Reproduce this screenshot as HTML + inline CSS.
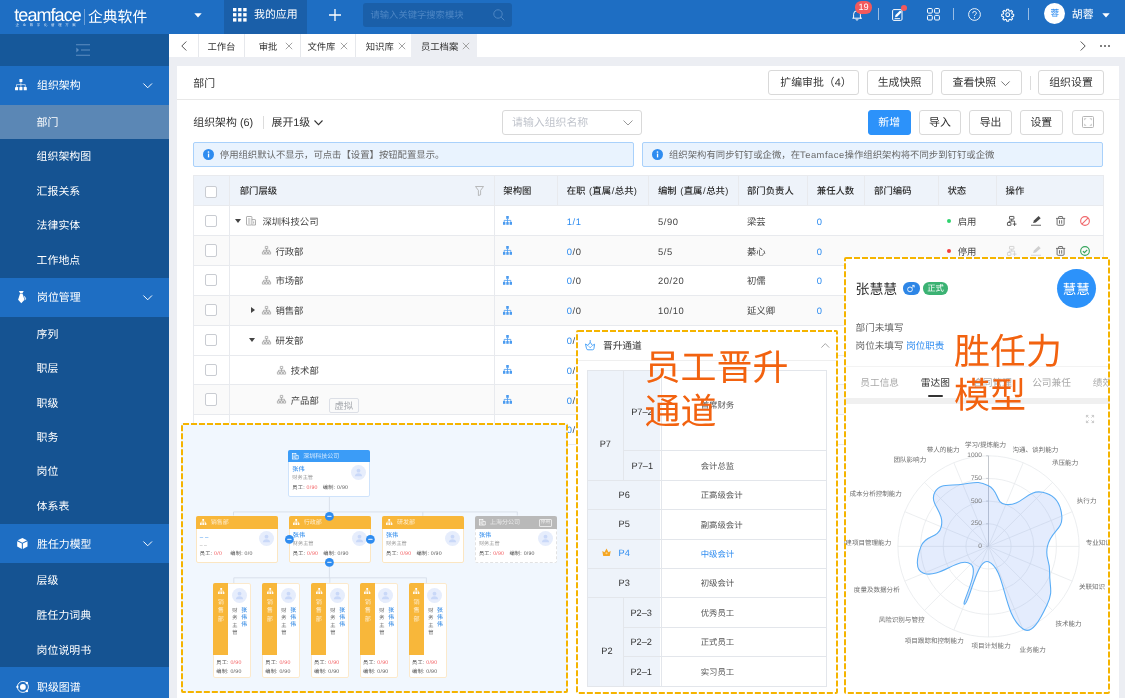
<!DOCTYPE html>
<html lang="zh-CN">
<head>
<meta charset="utf-8">
<title>Teamface 企典软件</title>
<style>
*{box-sizing:border-box;margin:0;padding:0}
html,body{width:1125px;height:698px;overflow:hidden;background:#eceef3}
body{font-family:"Liberation Sans","Noto Sans CJK SC",sans-serif;font-size:9.375px;color:#333;position:relative;-webkit-font-smoothing:antialiased;text-rendering:geometricPrecision}
.abs{position:absolute}
.t{position:absolute;white-space:nowrap;line-height:1}
svg{display:block;overflow:visible}
/* top bar */
#top{position:absolute;left:0;top:0;width:1125px;height:34px;background:#1e6ec3}
#top .myapp{position:absolute;left:224px;top:0;width:83px;height:34px;background:#1a5fa9}
#top .search{position:absolute;left:363px;top:2.5px;width:149px;height:24px;background:#1a5fa9;border-radius:3px}
.vd{position:absolute;width:1px;background:rgba(255,255,255,.55);top:8px;height:12px}
/* sidebar */
#side{position:absolute;left:0;top:34px;width:169px;height:664px;background:#155392}
#side .grp{position:absolute;left:0;width:169px;height:39px;background:#1e6ec3}
#side .sel{position:absolute;left:0;width:169px;background:#5b87b5}
#side .t{color:#fff;font-size:10.9px;margin-top:1.1px}
#top .t{margin-top:.8px}
#main>.t{margin-top:.8px}
/* tab bar */
#tabs{position:absolute;left:169px;top:34px;width:956px;height:23px;background:#fff}
#tabs .t{font-size:9.375px;color:#333;top:9.4px}
#tabs .d{position:absolute;top:0;width:1px;height:23px;background:#e6e8ec}
#tabs .x{position:absolute;top:8.3px;width:8px;height:8px}
/* card */
#card{position:absolute;left:177px;top:65.5px;width:942px;height:640px;background:#fff}
.btn{position:absolute;height:25px;border:1px solid #d9d9d9;border-radius:3px;background:#fff;font-size:10.9px;color:#333;text-align:center;line-height:25px;white-space:nowrap}
.btn.pri{background:#2c92fa;border-color:#2c92fa;color:#fff}
.banner{position:absolute;top:142px;height:24.5px;background:#e9f3fe;border:1px solid #a9d1fb;border-radius:2px}
.banner .t{top:8.2px;font-size:9.375px;color:#686868}
#main>.th{font-size:9.375px;font-weight:500;color:#2b2b2b;margin-top:1.3px}
#main>.td{font-size:9.375px;color:#444;margin-top:1.9px}
.ls{letter-spacing:1.1px}
.num{letter-spacing:.55px}
.cb{width:12.4px;height:12.4px;border:1px solid #c9ccd2;border-radius:2px;background:#fff}
.oc{width:82px;height:47px;background:#fff;border:1px solid #cfe3fb;border-radius:2px}
.rl{font-size:6.55px;color:#6e6e6e;margin-top:1.1px}
.big{font-size:36px;color:#f2620f;font-weight:400;line-height:1}
</style>
</head>
<body>
<div id="root" style="position:absolute;left:0;top:0;width:1125px;height:698px;will-change:transform;overflow:hidden">
<!-- ============ TOP BAR ============ -->
<div id="top">
  <!-- logo -->
  <div class="t" style="left:14.3px;top:5px;font-size:18px;color:#fff;letter-spacing:-0.95px;font-weight:400">teamface</div>
  <div class="t" style="left:15.6px;top:23px;font-size:3.4px;color:#dbe8f6;letter-spacing:3.7px">企业数字化管理方案</div>
  <div class="abs" style="left:84px;top:9px;width:1px;height:16px;background:rgba(255,255,255,.35)"></div>
  <div class="t" style="left:88px;top:10.5px;font-size:14.8px;color:#fff">企典软件</div>
  <svg class="abs" style="left:194px;top:13px" width="8" height="5" viewBox="0 0 8 5"><path d="M0.3 0.3h7.4L4 4.6z" fill="#fff"/></svg>
  <div class="myapp">
    <svg class="abs" style="left:9px;top:8px" width="14" height="14" viewBox="0 0 14 14" fill="#fff"><rect x="0" y="0" width="3.4" height="3.4"/><rect x="5.1" y="0" width="3.4" height="3.4"/><rect x="10.2" y="0" width="3.4" height="3.4"/><rect x="0" y="5.1" width="3.4" height="3.4"/><rect x="5.1" y="5.1" width="3.4" height="3.4"/><rect x="10.2" y="5.1" width="3.4" height="3.4"/><rect x="0" y="10.2" width="3.4" height="3.4"/><rect x="5.1" y="10.2" width="3.4" height="3.4"/><rect x="10.2" y="10.2" width="3.4" height="3.4"/></svg>
    <div class="t" style="left:30px;top:9px;font-size:10.9px;color:#fff">我的应用</div>
  </div>
  <svg class="abs" style="left:329px;top:8.5px" width="12" height="12" viewBox="0 0 12 12"><path d="M6 0v12M0 6h12" stroke="#fff" stroke-width="1.3" fill="none"/></svg>
  <div class="search">
    <div class="t" style="left:7.5px;top:7.5px;font-size:9.3px;color:#4d86c4">请输入关键字搜索模块</div>
    <svg class="abs" style="left:130px;top:6px" width="12" height="12" viewBox="0 0 12 12"><circle cx="5" cy="5" r="4.2" stroke="#4d86c4" stroke-width="1" fill="none"/><path d="M8.2 8.2L11.3 11.3" stroke="#4d86c4" stroke-width="1"/></svg>
  </div>
  <!-- right icons -->
  <svg class="abs" style="left:852px;top:9px" width="10" height="12" viewBox="0 0 10 12"><path d="M1.6 9.2V5.2a3.4 3.4 0 0 1 6.8 0v4H9.6M0.4 9.2h9.2M4 10.2a1 1 0 0 0 2 0" stroke="#fff" stroke-width="1" fill="none"/></svg>
  <div class="abs" style="left:855px;top:1.3px;width:17px;height:12.3px;border-radius:6.2px;background:#f2595c;color:#fff;font-size:9.2px;font-weight:400;line-height:12.6px;text-align:center">19</div>
  <div class="vd" style="left:878px"></div>
  <svg class="abs" style="left:892px;top:7.5px" width="12" height="13" viewBox="0 0 12 13"><rect x="0.6" y="1.6" width="9.4" height="10.8" rx="1.2" stroke="#fff" stroke-width="1" fill="none"/><path d="M3 9.2l.5-2.2 4.6-4.6 1.7 1.7-4.6 4.6z" fill="#fff"/><path d="M2.6 10.6h5.4" stroke="#fff" stroke-width=".9"/></svg>
  <div class="abs" style="left:900.8px;top:4.6px;width:6px;height:6px;border-radius:3px;background:#f2595c"></div>
  <svg class="abs" style="left:927px;top:7.6px" width="13" height="13" viewBox="0 0 13 13" fill="none" stroke="#fff" stroke-width="1"><rect x=".5" y=".5" width="4.8" height="4.6" rx="1"/><rect x="7.6" y=".5" width="4.8" height="4.6" rx="1"/><rect x=".5" y="7.4" width="4.8" height="4.6" rx="1"/><rect x="7.6" y="7.4" width="4.8" height="4.6" rx="1"/></svg>
  <div class="vd" style="left:953px"></div>
  <svg class="abs" style="left:968px;top:8px" width="13" height="13" viewBox="0 0 13 13"><circle cx="6.5" cy="6.5" r="5.9" stroke="#fff" stroke-width=".9" fill="none"/><path d="M4.7 5.2a1.8 1.8 0 1 1 2.6 1.6c-.6.3-.8.7-.8 1.3" stroke="#fff" stroke-width=".9" fill="none"/><circle cx="6.5" cy="9.7" r=".6" fill="#fff"/></svg>
  <svg class="abs" style="left:1001px;top:7.7px" width="13.4" height="13.4" viewBox="0 0 24 24" fill="none" stroke="#fff" stroke-width="1.95"><circle cx="12" cy="12" r="3.4"/><path d="M10.3 2.3h3.4l.5 2.7 1.9.8 2.3-1.6 2.4 2.4-1.6 2.3.8 1.9 2.7.5v3.4l-2.7.5-.8 1.9 1.6 2.3-2.4 2.4-2.3-1.6-1.9.8-.5 2.7h-3.4l-.5-2.7-1.9-.8-2.3 1.6-2.4-2.4 1.6-2.3-.8-1.9-2.7-.5v-3.4l2.7-.5.8-1.9-1.6-2.3 2.4-2.4 2.3 1.6 1.9-.8z" stroke-linejoin="round"/></svg>
  <div class="vd" style="left:1028px"></div>
  <div class="abs" style="left:1044.2px;top:3.3px;width:21.2px;height:21.2px;border-radius:11px;background:#fff;color:#2e8cf0;font-size:8.6px;line-height:21px;text-align:center">蓉</div>
  <div class="t" style="left:1071.8px;top:9px;font-size:10.9px;color:#fff">胡蓉</div>
  <svg class="abs" style="left:1102px;top:13px" width="8" height="5" viewBox="0 0 8 5"><path d="M0.3 0.3h7.4L4 4.6z" fill="#fff"/></svg>
</div>

<!-- ============ SIDEBAR ============ -->
<div id="side">
  <div class="abs" style="left:0;top:0;width:169px;height:31.5px;background:#16589a"></div>
  <svg class="abs" style="left:75.5px;top:10px" width="14" height="12" viewBox="0 0 14 12" stroke="#5d8dc1" stroke-width="1.1" fill="none"><path d="M0 .8h14M5 6h9M0 11.2h14"/><path d="M.3 3.6L3 6 .3 8.4z" fill="#5d8dc1" stroke="none"/></svg>

  <div class="grp" style="top:31.5px"></div>
  <div class="sel" style="top:70.5px;height:34.5px"></div>
  <div class="grp" style="top:243.7px"></div>
  <div class="grp" style="top:489.5px"></div>
  <div class="grp" style="top:632.6px"></div>

  <!-- group icons -->
  <svg class="abs" style="left:15.2px;top:45.2px" width="11.8" height="11.3" viewBox="0 0 11.8 11.3" fill="#fff"><rect x="4.4" y="0" width="3" height="3" rx=".5"/><rect x="0" y="8.1" width="3.1" height="3.1" rx=".5"/><rect x="4.35" y="8.1" width="3.1" height="3.1" rx=".5"/><rect x="8.7" y="8.1" width="3.1" height="3.1" rx=".5"/><path d="M5.9 3v5.1M1.55 8.1V5.6h8.7v2.5" stroke="#fff" stroke-width=".7" fill="none" opacity=".9"/></svg>
  <svg class="abs" style="left:17.9px;top:257.1px" width="8.4" height="12.4" viewBox="0 0 8.4 12.4" fill="#fff"><path d="M.9 0h4.8L4.6 2H2zM2.1 2.5h2.4l2 6.2-3.2 3.6L.1 8.7z"/><path d="M5.6 4.6c1.6 1 2.8 2.6 2.6 3.4L6.7 9.8 6.9 8.5z" opacity=".75"/></svg>
  <svg class="abs" style="left:16.9px;top:504px" width="10.7" height="11.2" viewBox="0 0 12 13" fill="#fff"><path d="M6 0l5.4 2.7L6 5.4.6 2.7z"/><path d="M0 3.8l5.4 2.7v6.2L0 10z"/><path d="M12 3.8L6.6 6.5v6.2L12 10z"/></svg>
  <svg class="abs" style="left:16px;top:646px" width="13.8" height="13.8" viewBox="0 0 13.8 13.8" fill="none" stroke="#fff" stroke-width=".9"><circle cx="6.9" cy="6.9" r="5.5"/><circle cx="6.9" cy="6.9" r="2.9" fill="#fff" stroke="none"/><circle cx="1.4" cy="6.9" r="1.15" fill="#fff" stroke="none"/><circle cx="10.9" cy="2.9" r="1.25" fill="#fff" stroke="none"/><circle cx="10.9" cy="10.9" r="1.25" fill="#fff" stroke="none"/></svg>

  <!-- chevrons -->
  <svg class="abs" style="left:143px;top:48.8px" width="9.4" height="5.6" viewBox="0 0 9.4 5.6"><path d="M.4.5L4.7 4.8 9 .5" stroke="#fff" stroke-width="1" fill="none"/></svg>
  <svg class="abs" style="left:143px;top:260.9px" width="9.4" height="5.6" viewBox="0 0 9.4 5.6"><path d="M.4.5L4.7 4.8 9 .5" stroke="#fff" stroke-width="1" fill="none"/></svg>
  <svg class="abs" style="left:143px;top:506.8px" width="9.4" height="5.6" viewBox="0 0 9.4 5.6"><path d="M.4.5L4.7 4.8 9 .5" stroke="#fff" stroke-width="1" fill="none"/></svg>

  <div class="t" style="left:37px;top:45.6px">组织架构</div>
  <div class="t" style="left:36.6px;top:82.9px">部门</div>
  <div class="t" style="left:36.6px;top:117.3px">组织架构图</div>
  <div class="t" style="left:36.6px;top:151.8px">汇报关系</div>
  <div class="t" style="left:36.6px;top:186.2px">法律实体</div>
  <div class="t" style="left:36.6px;top:220.5px">工作地点</div>
  <div class="t" style="left:37px;top:257.8px">岗位管理</div>
  <div class="t" style="left:36.6px;top:294.7px">序列</div>
  <div class="t" style="left:36.6px;top:329.2px">职层</div>
  <div class="t" style="left:36.6px;top:363.6px">职级</div>
  <div class="t" style="left:36.6px;top:398px">职务</div>
  <div class="t" style="left:36.6px;top:432.4px">岗位</div>
  <div class="t" style="left:36.6px;top:467px">体系表</div>
  <div class="t" style="left:37px;top:504.5px">胜任力模型</div>
  <div class="t" style="left:36.6px;top:541.4px">层级</div>
  <div class="t" style="left:36.6px;top:576px">胜任力词典</div>
  <div class="t" style="left:36.6px;top:610.6px">岗位说明书</div>
  <div class="t" style="left:37px;top:647.5px">职级图谱</div>
</div>

<!-- ============ TAB BAR ============ -->
<div id="tabs">
  <svg class="abs" style="left:11.5px;top:7px" width="6" height="10" viewBox="0 0 6 10"><path d="M5.3.5L.8 5l4.5 4.5" stroke="#555" stroke-width="1" fill="none"/></svg>
  <div class="d" style="left:29px"></div>
  <div class="t" style="left:38.4px">工作台</div>
  <div class="d" style="left:75px"></div>
  <div class="t" style="left:89.7px">审批</div>
  <svg class="x" style="left:115.5px" viewBox="0 0 8 8"><path d="M.8.8l6.4 6.4M7.2.8L.8 7.2" stroke="#999" stroke-width=".9"/></svg>
  <div class="d" style="left:131px"></div>
  <div class="t" style="left:138.4px">文件库</div>
  <svg class="x" style="left:171px" viewBox="0 0 8 8"><path d="M.8.8l6.4 6.4M7.2.8L.8 7.2" stroke="#999" stroke-width=".9"/></svg>
  <div class="d" style="left:186px"></div>
  <div class="t" style="left:196.7px">知识库</div>
  <svg class="x" style="left:228.8px" viewBox="0 0 8 8"><path d="M.8.8l6.4 6.4M7.2.8L.8 7.2" stroke="#999" stroke-width=".9"/></svg>
  <div class="abs" style="left:242.2px;top:0;width:66px;height:23px;background:#eceef3"></div>
  <div class="t" style="left:251.9px">员工档案</div>
  <svg class="x" style="left:292.8px" viewBox="0 0 8 8"><path d="M.8.8l6.4 6.4M7.2.8L.8 7.2" stroke="#999" stroke-width=".9"/></svg>
  <svg class="abs" style="left:910.5px;top:7px" width="6" height="10" viewBox="0 0 6 10"><path d="M.7.5L5.2 5 .7 9.5" stroke="#555" stroke-width="1" fill="none"/></svg>
  <div class="abs" style="left:931px;top:10.8px;width:2px;height:2px;border-radius:1px;background:#555;box-shadow:4px 0 0 #555,8px 0 0 #555"></div>
</div>

<!-- ============ CARD ============ -->
<div id="card">
</div>
<div id="main">
  <!-- card header -->
  <div class="t" style="left:193.3px;top:78.3px;font-size:10.9px;color:#333">部门</div>
  <div class="abs" style="left:177px;top:99px;width:942.5px;height:1px;background:#e8e8e8"></div>
  <div class="btn" style="left:768px;top:70px;width:90.5px;line-height:25px;padding-left:5.5px">扩编审批（4）</div>
  <div class="btn" style="left:866.5px;top:70px;width:66px;line-height:25px">生成快照</div>
  <div class="btn" style="left:940.5px;top:70px;width:81px;text-align:left;padding-left:11px;line-height:25px">查看快照<svg class="abs" style="left:59.5px;top:9.5px" width="9" height="5.4" viewBox="0 0 9 5.4"><path d="M.4.5L4.5 4.6 8.6.5" stroke="#666" stroke-width=".9" fill="none"/></svg></div>
  <div class="abs" style="left:1029.5px;top:76px;width:1px;height:14px;background:#dcdcdc"></div>
  <div class="btn" style="left:1038px;top:70px;width:66px;line-height:25px">组织设置</div>

  <!-- toolbar -->
  <div class="t" style="left:193.3px;top:116.8px;font-size:10.9px;color:#333">组织架构 (6)</div>
  <div class="abs" style="left:263px;top:116px;width:1px;height:13px;background:#dcdcdc"></div>
  <div class="t" style="left:271.5px;top:116.8px;font-size:10.9px;color:#333">展开1级</div>
  <svg class="abs" style="left:313.5px;top:120px" width="9" height="5.6" viewBox="0 0 9 5.6"><path d="M.5.5L4.5 4.6 8.5.5" stroke="#333" stroke-width="1.1" fill="none"/></svg>
  <div class="abs" style="left:502px;top:109.5px;width:140px;height:25px;border:1px solid #d9d9d9;border-radius:3px;background:#fff"></div>
  <div class="t" style="left:512px;top:116.8px;font-size:10.9px;color:#c0c4cc">请输入组织名称</div>
  <svg class="abs" style="left:622.5px;top:119.5px" width="10" height="6" viewBox="0 0 10 6"><path d="M.5.5L5 5 9.5.5" stroke="#999" stroke-width="1" fill="none"/></svg>
  <div class="btn pri" style="left:868px;top:109.5px;width:42.5px">新增</div>
  <div class="btn" style="left:918.7px;top:109.5px;width:42.5px">导入</div>
  <div class="btn" style="left:969.3px;top:109.5px;width:42.5px">导出</div>
  <div class="btn" style="left:1019.8px;top:109.5px;width:43px">设置</div>
  <div class="btn" style="left:1071.5px;top:109.5px;width:32.5px"><svg class="abs" style="left:9.5px;top:5.5px" width="12" height="12" viewBox="0 0 12 12"><rect x=".5" y=".5" width="11" height="11" rx="1" stroke="#b5b5b5" stroke-width="1" fill="#fff"/><path d="M2.2 4.6V2.2h2.4M7.4 2.2h2.4v2.4M9.8 7.4v2.4H7.4M4.6 9.8H2.2V7.4" fill="#c4c4c4" stroke="none"/></svg></div>

  <!-- banners -->
  <div class="banner" style="left:192.8px;width:441.3px">
    <svg class="abs" style="left:9px;top:6px" width="11" height="11" viewBox="0 0 11 11"><circle cx="5.5" cy="5.5" r="5.5" fill="#2e8cf0"/><rect x="4.9" y="4.6" width="1.3" height="3.8" fill="#fff"/><circle cx="5.5" cy="3" r=".85" fill="#fff"/></svg>
    <div class="t" style="left:26px">停用组织默认不显示，可点击【设置】按钮配置显示。</div>
  </div>
  <div class="banner" style="left:642px;width:461px">
    <svg class="abs" style="left:8.8px;top:6px" width="11" height="11" viewBox="0 0 11 11"><circle cx="5.5" cy="5.5" r="5.5" fill="#2e8cf0"/><rect x="4.9" y="4.6" width="1.3" height="3.8" fill="#fff"/><circle cx="5.5" cy="3" r=".85" fill="#fff"/></svg>
    <div class="t" style="left:26px">组织架构有同步钉钉或企微，在<span style="letter-spacing:.5px">Teamface</span>操作组织架构将不同步到钉钉或企微</div>
  </div>

<div class="abs" style="left:192.8px;top:175px;width:910.5px;height:30.5px;background:#eef3fa"></div>
  <div class="abs" style="left:192.8px;top:205.5px;width:910.5px;height:29.8px;background:#fff"></div>
  <div class="abs" style="left:192.8px;top:235.3px;width:910.5px;height:29.8px;background:#fafafa"></div>
  <div class="abs" style="left:192.8px;top:265.1px;width:910.5px;height:29.8px;background:#fff"></div>
  <div class="abs" style="left:192.8px;top:294.9px;width:910.5px;height:29.8px;background:#fafafa"></div>
  <div class="abs" style="left:192.8px;top:324.7px;width:910.5px;height:29.8px;background:#fff"></div>
  <div class="abs" style="left:192.8px;top:354.5px;width:910.5px;height:29.8px;background:#fff"></div>
  <div class="abs" style="left:192.8px;top:384.3px;width:910.5px;height:29.8px;background:#fafafa"></div>
  <div class="abs" style="left:192.8px;top:175.0px;width:910.5px;height:1px;background:#e8eaee"></div>
  <div class="abs" style="left:192.8px;top:205px;width:910.5px;height:1px;background:#e8eaee"></div>
  <div class="abs" style="left:192.8px;top:235.3px;width:910.5px;height:1px;background:#e8eaee"></div>
  <div class="abs" style="left:192.8px;top:265.1px;width:910.5px;height:1px;background:#e8eaee"></div>
  <div class="abs" style="left:192.8px;top:294.9px;width:910.5px;height:1px;background:#e8eaee"></div>
  <div class="abs" style="left:192.8px;top:324.7px;width:910.5px;height:1px;background:#e8eaee"></div>
  <div class="abs" style="left:192.8px;top:354.5px;width:910.5px;height:1px;background:#e8eaee"></div>
  <div class="abs" style="left:192.8px;top:384.3px;width:910.5px;height:1px;background:#e8eaee"></div>
  <div class="abs" style="left:192.8px;top:414.1px;width:910.5px;height:1px;background:#e8eaee"></div>
  <div class="abs" style="left:192.8px;top:175px;width:1px;height:249.1px;background:#e8eaee"></div>
  <div class="abs" style="left:229.2px;top:175px;width:1px;height:249.1px;background:#e8eaee"></div>
  <div class="abs" style="left:493.7px;top:175px;width:1px;height:249.1px;background:#e8eaee"></div>
  <div class="abs" style="left:557.4px;top:175px;width:1px;height:30.5px;background:#e8eaee"></div>
  <div class="abs" style="left:648.2px;top:175px;width:1px;height:30.5px;background:#e8eaee"></div>
  <div class="abs" style="left:738.2px;top:175px;width:1px;height:30.5px;background:#e8eaee"></div>
  <div class="abs" style="left:807.3px;top:175px;width:1px;height:30.5px;background:#e8eaee"></div>
  <div class="abs" style="left:864.2px;top:175px;width:1px;height:30.5px;background:#e8eaee"></div>
  <div class="abs" style="left:938.3px;top:175px;width:1px;height:30.5px;background:#e8eaee"></div>
  <div class="abs" style="left:995.7px;top:175px;width:1px;height:30.5px;background:#e8eaee"></div>
  <div class="abs" style="left:1103.3px;top:175px;width:1px;height:249.1px;background:#e8eaee"></div>
  <div class="t th" style="left:239.7px;top:186.0px">部门层级</div>
  <div class="t th" style="left:503.3px;top:186.0px">架构图</div>
  <div class="t th" style="left:566.7px;top:186.0px">在职<span style="margin:0 .2px 0 1px"> (</span>直属<span style="margin:0 .6px">/</span>总共<span style="margin-left:.3px">)</span></div>
  <div class="t th" style="left:658px;top:186.0px">编制<span style="margin:0 .2px 0 1px"> (</span>直属<span style="margin:0 .6px">/</span>总共<span style="margin-left:.3px">)</span></div>
  <div class="t th" style="left:747px;top:186.0px">部门负责人</div>
  <div class="t th" style="left:816.8px;top:186.0px">兼任人数</div>
  <div class="t th" style="left:874.1px;top:186.0px">部门编码</div>
  <div class="t th" style="left:947.4px;top:186.0px">状态</div>
  <div class="t th" style="left:1005.6px;top:186.0px">操作</div>
  <svg class="abs" style="left:474.5px;top:186px" width="9" height="10" viewBox="0 0 9 10"><path d="M.5.5h8L5.6 4.4v4.4L3.4 9.5V4.4z" stroke="#aaa" stroke-width=".8" fill="none" stroke-linejoin="round"/></svg>
  <div class="abs cb" style="left:204.7px;top:186.0px"></div>
  <div class="abs cb" style="left:204.7px;top:214.5px"></div>
  <svg class="abs" style="left:235.4px;top:218.8px" width="6" height="4" viewBox="0 0 6 4"><path d="M0 0h6L3 4z" fill="#444"/></svg>
  <svg class="abs" style="left:246px;top:216.0px" width="10" height="9.5" viewBox="0 0 10 9.5" fill="none" stroke="#999" stroke-width=".8"><rect x=".5" y=".5" width="5.4" height="8.5" rx=".6"/><path d="M5.9 3.6h3.1a.5.5 0 0 1 .5.5V9H5.9M2 3h2.4M2 5h2.4M2 7h2.4M7.7 5.4v2.2"/></svg>
  <div class="t td" style="left:262.4px;top:215.9px">深圳科技公司</div>
  <svg class="abs" style="left:503px;top:216.2px" width="9" height="9" viewBox="0 0 9 9" fill="#4a9bf0"><rect x="3.2" y="0" width="2.6" height="2.8"/><rect x="0" y="6" width="2.4" height="2.8"/><rect x="3.3" y="6" width="2.4" height="2.8"/><rect x="6.6" y="6" width="2.4" height="2.8"/><path d="M4.5 2.8v3.2M1.2 6V4.4h6.6V6" stroke="#4a9bf0" stroke-width=".8" fill="none"/></svg>
  <div class="t td num" style="left:566.8px;top:215.9px;color:#2e8cf0">1/1</div>
  <div class="t td num" style="left:658px;top:215.9px">5/90</div>
  <div class="t td" style="left:747px;top:215.9px">梁芸</div>
  <div class="t td num" style="left:816.8px;top:215.9px;color:#2e8cf0">0</div>
  <div class="abs cb" style="left:204.7px;top:244.3px"></div>
  <svg class="abs" style="left:261.5px;top:246.4px" width="9" height="8.5" viewBox="0 0 9 8.5" stroke="#999"><path d="M3.3.4h2.4v2.2H3.3zM.4 5.9h2.2v2.2H.4zM3.4 5.9h2.2v2.2H3.4zM6.4 5.9h2.2v2.2H6.4zM4.5 2.6v3.3M1.5 5.9V4.3h6v1.6" fill="none" stroke-width=".7"/></svg>
  <div class="t td" style="left:275.4px;top:245.7px">行政部</div>
  <svg class="abs" style="left:503px;top:246.0px" width="9" height="9" viewBox="0 0 9 9" fill="#4a9bf0"><rect x="3.2" y="0" width="2.6" height="2.8"/><rect x="0" y="6" width="2.4" height="2.8"/><rect x="3.3" y="6" width="2.4" height="2.8"/><rect x="6.6" y="6" width="2.4" height="2.8"/><path d="M4.5 2.8v3.2M1.2 6V4.4h6.6V6" stroke="#4a9bf0" stroke-width=".8" fill="none"/></svg>
  <div class="t td num" style="left:566.8px;top:245.7px"><span style="color:#2e8cf0">0</span>/0</div>
  <div class="t td num" style="left:658px;top:245.7px">5/5</div>
  <div class="t td" style="left:747px;top:245.7px">綦心</div>
  <div class="t td num" style="left:816.8px;top:245.7px;color:#2e8cf0">0</div>
  <div class="abs cb" style="left:204.7px;top:274.1px"></div>
  <svg class="abs" style="left:261.5px;top:276.2px" width="9" height="8.5" viewBox="0 0 9 8.5" stroke="#999"><path d="M3.3.4h2.4v2.2H3.3zM.4 5.9h2.2v2.2H.4zM3.4 5.9h2.2v2.2H3.4zM6.4 5.9h2.2v2.2H6.4zM4.5 2.6v3.3M1.5 5.9V4.3h6v1.6" fill="none" stroke-width=".7"/></svg>
  <div class="t td" style="left:275.4px;top:275.5px">市场部</div>
  <svg class="abs" style="left:503px;top:275.8px" width="9" height="9" viewBox="0 0 9 9" fill="#4a9bf0"><rect x="3.2" y="0" width="2.6" height="2.8"/><rect x="0" y="6" width="2.4" height="2.8"/><rect x="3.3" y="6" width="2.4" height="2.8"/><rect x="6.6" y="6" width="2.4" height="2.8"/><path d="M4.5 2.8v3.2M1.2 6V4.4h6.6V6" stroke="#4a9bf0" stroke-width=".8" fill="none"/></svg>
  <div class="t td num" style="left:566.8px;top:275.5px"><span style="color:#2e8cf0">0</span>/0</div>
  <div class="t td num" style="left:658px;top:275.5px">20/20</div>
  <div class="t td" style="left:747px;top:275.5px">初儒</div>
  <div class="t td num" style="left:816.8px;top:275.5px;color:#2e8cf0">0</div>
  <div class="abs cb" style="left:204.7px;top:303.9px"></div>
  <svg class="abs" style="left:250.5px;top:307.2px" width="4" height="6" viewBox="0 0 4 6"><path d="M0 0v6L4 3z" fill="#444"/></svg>
  <svg class="abs" style="left:261.5px;top:306.0px" width="9" height="8.5" viewBox="0 0 9 8.5" stroke="#999"><path d="M3.3.4h2.4v2.2H3.3zM.4 5.9h2.2v2.2H.4zM3.4 5.9h2.2v2.2H3.4zM6.4 5.9h2.2v2.2H6.4zM4.5 2.6v3.3M1.5 5.9V4.3h6v1.6" fill="none" stroke-width=".7"/></svg>
  <div class="t td" style="left:275.4px;top:305.3px">销售部</div>
  <svg class="abs" style="left:503px;top:305.6px" width="9" height="9" viewBox="0 0 9 9" fill="#4a9bf0"><rect x="3.2" y="0" width="2.6" height="2.8"/><rect x="0" y="6" width="2.4" height="2.8"/><rect x="3.3" y="6" width="2.4" height="2.8"/><rect x="6.6" y="6" width="2.4" height="2.8"/><path d="M4.5 2.8v3.2M1.2 6V4.4h6.6V6" stroke="#4a9bf0" stroke-width=".8" fill="none"/></svg>
  <div class="t td num" style="left:566.8px;top:305.3px"><span style="color:#2e8cf0">0</span>/0</div>
  <div class="t td num" style="left:658px;top:305.3px">10/10</div>
  <div class="t td" style="left:747px;top:305.3px">延义卿</div>
  <div class="t td num" style="left:816.8px;top:305.3px;color:#2e8cf0">0</div>
  <div class="abs cb" style="left:204.7px;top:333.7px"></div>
  <svg class="abs" style="left:249.4px;top:338.0px" width="6" height="4" viewBox="0 0 6 4"><path d="M0 0h6L3 4z" fill="#444"/></svg>
  <svg class="abs" style="left:261.5px;top:335.8px" width="9" height="8.5" viewBox="0 0 9 8.5" stroke="#999"><path d="M3.3.4h2.4v2.2H3.3zM.4 5.9h2.2v2.2H.4zM3.4 5.9h2.2v2.2H3.4zM6.4 5.9h2.2v2.2H6.4zM4.5 2.6v3.3M1.5 5.9V4.3h6v1.6" fill="none" stroke-width=".7"/></svg>
  <div class="t td" style="left:275.4px;top:335.1px">研发部</div>
  <svg class="abs" style="left:503px;top:335.4px" width="9" height="9" viewBox="0 0 9 9" fill="#4a9bf0"><rect x="3.2" y="0" width="2.6" height="2.8"/><rect x="0" y="6" width="2.4" height="2.8"/><rect x="3.3" y="6" width="2.4" height="2.8"/><rect x="6.6" y="6" width="2.4" height="2.8"/><path d="M4.5 2.8v3.2M1.2 6V4.4h6.6V6" stroke="#4a9bf0" stroke-width=".8" fill="none"/></svg>
  <div class="t td num" style="left:566.8px;top:335.1px"><span style="color:#2e8cf0">0</span>/0</div>
  <div class="abs cb" style="left:204.7px;top:363.5px"></div>
  <svg class="abs" style="left:277.3px;top:365.6px" width="9" height="8.5" viewBox="0 0 9 8.5" stroke="#999"><path d="M3.3.4h2.4v2.2H3.3zM.4 5.9h2.2v2.2H.4zM3.4 5.9h2.2v2.2H3.4zM6.4 5.9h2.2v2.2H6.4zM4.5 2.6v3.3M1.5 5.9V4.3h6v1.6" fill="none" stroke-width=".7"/></svg>
  <div class="t td" style="left:290.7px;top:364.9px">技术部</div>
  <svg class="abs" style="left:503px;top:365.2px" width="9" height="9" viewBox="0 0 9 9" fill="#4a9bf0"><rect x="3.2" y="0" width="2.6" height="2.8"/><rect x="0" y="6" width="2.4" height="2.8"/><rect x="3.3" y="6" width="2.4" height="2.8"/><rect x="6.6" y="6" width="2.4" height="2.8"/><path d="M4.5 2.8v3.2M1.2 6V4.4h6.6V6" stroke="#4a9bf0" stroke-width=".8" fill="none"/></svg>
  <div class="t td num" style="left:566.8px;top:364.9px"><span style="color:#2e8cf0">0</span>/0</div>
  <div class="abs cb" style="left:204.7px;top:393.3px"></div>
  <svg class="abs" style="left:277.3px;top:395.4px" width="9" height="8.5" viewBox="0 0 9 8.5" stroke="#999"><path d="M3.3.4h2.4v2.2H3.3zM.4 5.9h2.2v2.2H.4zM3.4 5.9h2.2v2.2H3.4zM6.4 5.9h2.2v2.2H6.4zM4.5 2.6v3.3M1.5 5.9V4.3h6v1.6" fill="none" stroke-width=".7"/></svg>
  <div class="t td" style="left:290.7px;top:394.7px">产品部</div>
  <svg class="abs" style="left:503px;top:395.0px" width="9" height="9" viewBox="0 0 9 9" fill="#4a9bf0"><rect x="3.2" y="0" width="2.6" height="2.8"/><rect x="0" y="6" width="2.4" height="2.8"/><rect x="3.3" y="6" width="2.4" height="2.8"/><rect x="6.6" y="6" width="2.4" height="2.8"/><path d="M4.5 2.8v3.2M1.2 6V4.4h6.6V6" stroke="#4a9bf0" stroke-width=".8" fill="none"/></svg>
  <div class="t td num" style="left:566.8px;top:394.7px"><span style="color:#2e8cf0">0</span>/0</div>
  <div class="abs" style="left:329px;top:397.5px;width:29.6px;height:15px;border:1px solid #dcdfe6;border-radius:2px;background:#fafafa;color:#a6a9ae;font-size:9.375px;line-height:14px;text-align:center">虚拟</div>
  <div class="abs" style="left:947.2px;top:219.4px;width:3.8px;height:3.8px;border-radius:2px;background:#2fd36e"></div>
  <div class="t td" style="left:957.7px;top:215.9px">启用</div>
  <svg class="abs" style="left:1007.1px;top:216.1px" width="9.6" height="10.2" viewBox="0 0 9.6 10.2" fill="none" stroke="#4a4a4a" stroke-width=".9"><rect x="2.5" y=".45" width="4.4" height="2.7" rx=".3"/><rect x=".45" y="6.5" width="3.5" height="2.9" rx=".3"/><path d="M4.7 3.2v1.9M2.1 6.5V5.1h5.5v1.1M7.6 6.2v3.8M5.7 8.1h3.8"/></svg>
  <svg class="abs" style="left:1031.1px;top:216.1px" width="10" height="10" viewBox="0 0 10 10"><path d="M2.1 7.1l.8-2.7L7.6.1l2.1 2.1L4.8 6.4z" fill="#4a4a4a"/><path d="M0 9.25h10" stroke="#4a4a4a" stroke-width=".85"/></svg>
  <svg class="abs" style="left:1056px;top:216.1px" width="9.2" height="9.8" viewBox="0 0 9.2 9.8" fill="none" stroke="#686868" stroke-width=".95"><path d="M0 2.4h9.2M2.6 2.3V1.1a.6.6 0 0 1 .6-.6h2.8a.6.6 0 0 1 .6.6v1.2M1.1 2.6v5.7a1 1 0 0 0 1 1h5a1 1 0 0 0 1-1V2.6M3.5 4.2v3.5M5.7 4.2v3.5"/></svg>
  <svg class="abs" style="left:1079.8px;top:216.3px" width="10" height="10" viewBox="0 0 10 10" fill="none" stroke="#f0666a" stroke-width="1.1"><circle cx="5" cy="5" r="4.35"/><path d="M1.9 8.1L8.1 1.9"/></svg>
  <div class="abs" style="left:947.2px;top:249px;width:3.8px;height:3.8px;border-radius:2px;background:#f23c3c"></div>
  <div class="t td" style="left:957.7px;top:245.7px">停用</div>
  <svg class="abs" style="left:1007.1px;top:245.6px" width="9.6" height="10.2" viewBox="0 0 9.6 10.2" fill="none" stroke="#cfcfcf" stroke-width=".9"><rect x="2.5" y=".45" width="4.4" height="2.7" rx=".3"/><rect x=".45" y="6.5" width="3.5" height="2.9" rx=".3"/><path d="M4.7 3.2v1.9M2.1 6.5V5.1h5.5v1.1M7.6 6.2v3.8M5.7 8.1h3.8"/></svg>
  <svg class="abs" style="left:1031.1px;top:245.6px" width="10" height="10" viewBox="0 0 10 10"><path d="M2.1 7.1l.8-2.7L7.6.1l2.1 2.1L4.8 6.4z" fill="#cfcfcf"/><path d="M0 9.25h10" stroke="#cfcfcf" stroke-width=".85"/></svg>
  <svg class="abs" style="left:1056px;top:245.6px" width="9.2" height="9.8" viewBox="0 0 9.2 9.8" fill="none" stroke="#686868" stroke-width=".95"><path d="M0 2.4h9.2M2.6 2.3V1.1a.6.6 0 0 1 .6-.6h2.8a.6.6 0 0 1 .6.6v1.2M1.1 2.6v5.7a1 1 0 0 0 1 1h5a1 1 0 0 0 1-1V2.6M3.5 4.2v3.5M5.7 4.2v3.5"/></svg>
  <svg class="abs" style="left:1079.8px;top:245.8px" width="10" height="10" viewBox="0 0 10 10" fill="none" stroke="#36a55c" stroke-width="1.1"><circle cx="5" cy="5" r="4.35"/><path d="M2.9 5.1l1.5 1.5 2.8-2.8" stroke-width="1.2"/></svg>
<div class="t td num" style="left:566.8px;top:424.3px"><span style="color:#2e8cf0">0</span>/0</div>
  <div class="abs" style="left:192.8px;top:443.9px;width:910.5px;height:1px;background:#e8eaee"></div>
<!--/TABLE-->
</div>

<!-- ============ ORG CHART PANEL ============ -->
<div id="org" class="abs" style="left:181px;top:423px;width:387px;height:270px;background:#f1f7fe"></div>
<svg class="abs" style="left:0;top:0" width="1125" height="698" viewBox="0 0 1125 698" fill="none" stroke="#d3dbe6" stroke-width=".8">
<path d="M329.4 496v16M233.5 515.5v-3.6h283.8v3.6M422.8 511.9v4M329.4 562v16M233.8 583v-5.2h192.6v5.2M329.8 577.8v5"/></svg>
<div class="abs oc" style="left:288.3px;top:450.1px;border-color:#cfe3fb"><div class="abs" style="left:-1px;top:-1px;width:82px;height:12.4px;background:#3b9cf7;border-radius:2px 2px 0 0"></div></div>
<svg class="abs" style="left:292.3px;top:453.1px" width="6.6" height="6.4" viewBox="0 0 10 9.5" fill="none" stroke="#fff" stroke-width="1.1"><rect x=".5" y=".5" width="5.4" height="8.5"/><path d="M5.9 3.6h3.6V9H5.9M2 3h2.4M2 5h2.4M2 7h2.4"/></svg>
<div class="t" style="left:303.3px;top:454.2px;font-size:6px;color:#d9ebfe">深圳科技公司</div>
<div class="t" style="left:292.3px;top:466.9px;font-size:6.1px;font-weight:500;color:#3a92ee">张伟</div>
<div class="t" style="left:292.3px;top:475.9px;font-size:5.2px;color:#999">财务主管</div>
<div class="t" style="left:292.3px;top:486.1px;font-size:5.2px;color:#555;letter-spacing:.25px">员工: <span style="color:#f2595c">0/90</span></div>
<div class="t" style="left:322.8px;top:486.1px;font-size:5.2px;color:#555;letter-spacing:.25px">编制: 0/90</div>
<svg class="abs" style="left:351.3px;top:464.7px" width="15" height="15" viewBox="0 0 15 15"><circle cx="7.5" cy="7.5" r="7.5" fill="#e6edfc"/><circle cx="7.5" cy="5.7" r="1.9" fill="#c9d8f8"/><path d="M3.9 11.2c0-2 1.6-3 3.6-3s3.6 1 3.6 3z" fill="#c9d8f8"/></svg>
<div class="abs oc" style="left:195.8px;top:516.3px;border-color:#fbe6c2"><div class="abs" style="left:-1px;top:-1px;width:82px;height:12.4px;background:#f8b73a;border-radius:2px 2px 0 0"></div></div>
<svg class="abs" style="left:199.8px;top:519.3px" width="6.4" height="6" viewBox="0 0 9 8.5" fill="#fff"><rect x="3.2" y="0" width="2.6" height="2.6"/><rect x="0" y="5.8" width="2.4" height="2.6"/><rect x="3.3" y="5.8" width="2.4" height="2.6"/><rect x="6.6" y="5.8" width="2.4" height="2.6"/><path d="M4.5 2.6v3.2M1.2 5.8V4.3h6.6v1.5" stroke="#fff" stroke-width=".8" fill="none"/></svg>
<div class="t" style="left:210.8px;top:520.4px;font-size:6px;color:#fdedcf">销售部</div>
<div class="t" style="left:199.8px;top:534.9px;font-size:6.1px;font-weight:500;color:#3a92ee">– –</div>
<div class="t" style="left:199.8px;top:543.7px;font-size:5.2px;color:#999">– –</div>
<div class="t" style="left:199.8px;top:552.3px;font-size:5.2px;color:#555;letter-spacing:.25px">员工: <span style="color:#f2595c">0/0</span></div>
<div class="t" style="left:230.3px;top:552.3px;font-size:5.2px;color:#555;letter-spacing:.25px">编制: 0/0</div>
<svg class="abs" style="left:258.8px;top:530.9px" width="15" height="15" viewBox="0 0 15 15"><circle cx="7.5" cy="7.5" r="7.5" fill="#e6edfc"/><circle cx="7.5" cy="5.7" r="1.9" fill="#c9d8f8"/><path d="M3.9 11.2c0-2 1.6-3 3.6-3s3.6 1 3.6 3z" fill="#c9d8f8"/></svg>
<div class="abs oc" style="left:288.8px;top:516.3px;border-color:#fbe6c2"><div class="abs" style="left:-1px;top:-1px;width:82px;height:12.4px;background:#f8b73a;border-radius:2px 2px 0 0"></div></div>
<svg class="abs" style="left:292.8px;top:519.3px" width="6.4" height="6" viewBox="0 0 9 8.5" fill="#fff"><rect x="3.2" y="0" width="2.6" height="2.6"/><rect x="0" y="5.8" width="2.4" height="2.6"/><rect x="3.3" y="5.8" width="2.4" height="2.6"/><rect x="6.6" y="5.8" width="2.4" height="2.6"/><path d="M4.5 2.6v3.2M1.2 5.8V4.3h6.6v1.5" stroke="#fff" stroke-width=".8" fill="none"/></svg>
<div class="t" style="left:303.8px;top:520.4px;font-size:6px;color:#fdedcf">行政部</div>
<div class="t" style="left:292.8px;top:533.1px;font-size:6.1px;font-weight:500;color:#3a92ee">张伟</div>
<div class="t" style="left:292.8px;top:542.1px;font-size:5.2px;color:#999">财务主管</div>
<div class="t" style="left:292.8px;top:552.3px;font-size:5.2px;color:#555;letter-spacing:.25px">员工: <span style="color:#f2595c">0/90</span></div>
<div class="t" style="left:323.3px;top:552.3px;font-size:5.2px;color:#555;letter-spacing:.25px">编制: 0/90</div>
<svg class="abs" style="left:351.8px;top:530.9px" width="15" height="15" viewBox="0 0 15 15"><circle cx="7.5" cy="7.5" r="7.5" fill="#e6edfc"/><circle cx="7.5" cy="5.7" r="1.9" fill="#c9d8f8"/><path d="M3.9 11.2c0-2 1.6-3 3.6-3s3.6 1 3.6 3z" fill="#c9d8f8"/></svg>
<div class="abs oc" style="left:382px;top:516.3px;border-color:#fbe6c2"><div class="abs" style="left:-1px;top:-1px;width:82px;height:12.4px;background:#f8b73a;border-radius:2px 2px 0 0"></div></div>
<svg class="abs" style="left:386px;top:519.3px" width="6.4" height="6" viewBox="0 0 9 8.5" fill="#fff"><rect x="3.2" y="0" width="2.6" height="2.6"/><rect x="0" y="5.8" width="2.4" height="2.6"/><rect x="3.3" y="5.8" width="2.4" height="2.6"/><rect x="6.6" y="5.8" width="2.4" height="2.6"/><path d="M4.5 2.6v3.2M1.2 5.8V4.3h6.6v1.5" stroke="#fff" stroke-width=".8" fill="none"/></svg>
<div class="t" style="left:397px;top:520.4px;font-size:6px;color:#fdedcf">研发部</div>
<div class="t" style="left:386px;top:533.1px;font-size:6.1px;font-weight:500;color:#3a92ee">张伟</div>
<div class="t" style="left:386px;top:542.1px;font-size:5.2px;color:#999">财务主管</div>
<div class="t" style="left:386px;top:552.3px;font-size:5.2px;color:#555;letter-spacing:.25px">员工: <span style="color:#f2595c">0/90</span></div>
<div class="t" style="left:416.5px;top:552.3px;font-size:5.2px;color:#555;letter-spacing:.25px">编制: 0/90</div>
<svg class="abs" style="left:445px;top:530.9px" width="15" height="15" viewBox="0 0 15 15"><circle cx="7.5" cy="7.5" r="7.5" fill="#e6edfc"/><circle cx="7.5" cy="5.7" r="1.9" fill="#c9d8f8"/><path d="M3.9 11.2c0-2 1.6-3 3.6-3s3.6 1 3.6 3z" fill="#c9d8f8"/></svg>
<div class="abs oc" style="left:474.9px;top:516.3px;border:1px dashed #e2e2e2"><div class="abs" style="left:-1px;top:-1px;width:82px;height:12.4px;background:#b9b9b9;border-radius:2px 2px 0 0"></div></div>
<svg class="abs" style="left:478.9px;top:519.3px" width="6.6" height="6.4" viewBox="0 0 10 9.5" fill="none" stroke="#fff" stroke-width="1.1"><rect x=".5" y=".5" width="5.4" height="8.5"/><path d="M5.9 3.6h3.6V9H5.9M2 3h2.4M2 5h2.4M2 7h2.4"/></svg>
<div class="t" style="left:489.9px;top:520.4px;font-size:6px;color:#ececec">上海分公司</div>
<div class="t" style="left:478.9px;top:533.1px;font-size:6.1px;font-weight:500;color:#3a92ee">张伟</div>
<div class="t" style="left:478.9px;top:542.1px;font-size:5.2px;color:#999">财务主管</div>
<div class="t" style="left:478.9px;top:552.3px;font-size:5.2px;color:#555;letter-spacing:.25px">员工: <span style="color:#f2595c">0/90</span></div>
<div class="t" style="left:509.4px;top:552.3px;font-size:5.2px;color:#555;letter-spacing:.25px">编制: 0/90</div>
<svg class="abs" style="left:537.9px;top:530.9px" width="15" height="15" viewBox="0 0 15 15"><circle cx="7.5" cy="7.5" r="7.5" fill="#e6edfc"/><circle cx="7.5" cy="5.7" r="1.9" fill="#c9d8f8"/><path d="M3.9 11.2c0-2 1.6-3 3.6-3s3.6 1 3.6 3z" fill="#c9d8f8"/></svg>
<div class="abs" style="left:538.9px;top:518.9px;width:13.4px;height:7.8px;border:.6px solid #e8e8e8;border-radius:1px;color:#eee;font-size:4.8px;line-height:6.6px;text-align:center">停用</div>
<svg class="abs" style="left:325.0px;top:512.2px" width="8.8" height="8.8" viewBox="0 0 8.8 8.8"><circle cx="4.4" cy="4.4" r="4.4" fill="#2e8cf0"/><rect x="2.2" y="3.8" width="4.4" height="1.2" rx=".5" fill="#cfe4fb"/></svg>
<svg class="abs" style="left:284.9px;top:535.1px" width="8.8" height="8.8" viewBox="0 0 8.8 8.8"><circle cx="4.4" cy="4.4" r="4.4" fill="#2e8cf0"/><rect x="2.2" y="3.8" width="4.4" height="1.2" rx=".5" fill="#cfe4fb"/></svg>
<svg class="abs" style="left:365.8px;top:535.1px" width="8.8" height="8.8" viewBox="0 0 8.8 8.8"><circle cx="4.4" cy="4.4" r="4.4" fill="#2e8cf0"/><rect x="2.2" y="3.8" width="4.4" height="1.2" rx=".5" fill="#cfe4fb"/></svg>
<svg class="abs" style="left:325.2px;top:557.5px" width="8.8" height="8.8" viewBox="0 0 8.8 8.8"><circle cx="4.4" cy="4.4" r="4.4" fill="#2e8cf0"/><rect x="2.2" y="3.8" width="4.4" height="1.2" rx=".5" fill="#cfe4fb"/></svg>
<div class="abs" style="left:213.4px;top:583.1px;width:37.4px;height:95.2px;background:#fff;border:1px solid #fbe9cc;border-radius:2px"></div>
<div class="abs" style="left:213.4px;top:583.1px;width:14.8px;height:72.2px;background:#f8b73a;border-radius:2px 0 0 0"></div>
<svg class="abs" style="left:217.6px;top:587.8px" width="6.4" height="6" viewBox="0 0 9 8.5" fill="#fff"><rect x="3.2" y="0" width="2.6" height="2.6"/><rect x="0" y="5.8" width="2.4" height="2.6"/><rect x="3.3" y="5.8" width="2.4" height="2.6"/><rect x="6.6" y="5.8" width="2.4" height="2.6"/><path d="M4.5 2.6v3.2M1.2 5.8V4.3h6.6v1.5" stroke="#fff" stroke-width=".8" fill="none"/></svg>
<div class="abs" style="left:217.7px;top:598.8px;width:6.2px;font-size:6.1px;line-height:8.4px;color:#fdeccb;text-align:center">销售部</div>
<svg class="abs" style="left:231.6px;top:587.6px" width="15" height="15" viewBox="0 0 15 15"><circle cx="7.5" cy="7.5" r="7.5" fill="#e6edfc"/><circle cx="7.5" cy="5.7" r="1.9" fill="#c9d8f8"/><path d="M3.9 11.2c0-2 1.6-3 3.6-3s3.6 1 3.6 3z" fill="#c9d8f8"/></svg>
<div class="abs" style="left:232.3px;top:607.8px;width:5.3px;font-size:5.2px;line-height:7.45px;color:#666;text-align:center">财务主管</div>
<div class="abs" style="left:241.2px;top:607.5px;width:6px;font-size:5.8px;line-height:7.45px;color:#3a8ee6;text-align:center;font-weight:500">张伟伟</div>
<div class="t" style="left:216.2px;top:661.0px;font-size:5.2px;color:#555;letter-spacing:.25px">员工: <span style="color:#f2595c">0/90</span></div>
<div class="t" style="left:216.2px;top:669.8px;font-size:5.2px;color:#555;letter-spacing:.25px">编制: 0/90</div>
<div class="abs" style="left:262.4px;top:583.1px;width:37.4px;height:95.2px;background:#fff;border:1px solid #fbe9cc;border-radius:2px"></div>
<div class="abs" style="left:262.4px;top:583.1px;width:14.8px;height:72.2px;background:#f8b73a;border-radius:2px 0 0 0"></div>
<svg class="abs" style="left:266.6px;top:587.8px" width="6.4" height="6" viewBox="0 0 9 8.5" fill="#fff"><rect x="3.2" y="0" width="2.6" height="2.6"/><rect x="0" y="5.8" width="2.4" height="2.6"/><rect x="3.3" y="5.8" width="2.4" height="2.6"/><rect x="6.6" y="5.8" width="2.4" height="2.6"/><path d="M4.5 2.6v3.2M1.2 5.8V4.3h6.6v1.5" stroke="#fff" stroke-width=".8" fill="none"/></svg>
<div class="abs" style="left:266.7px;top:598.8px;width:6.2px;font-size:6.1px;line-height:8.4px;color:#fdeccb;text-align:center">销售部</div>
<svg class="abs" style="left:280.6px;top:587.6px" width="15" height="15" viewBox="0 0 15 15"><circle cx="7.5" cy="7.5" r="7.5" fill="#e6edfc"/><circle cx="7.5" cy="5.7" r="1.9" fill="#c9d8f8"/><path d="M3.9 11.2c0-2 1.6-3 3.6-3s3.6 1 3.6 3z" fill="#c9d8f8"/></svg>
<div class="abs" style="left:281.2px;top:607.8px;width:5.3px;font-size:5.2px;line-height:7.45px;color:#666;text-align:center">财务主管</div>
<div class="abs" style="left:290.2px;top:607.5px;width:6px;font-size:5.8px;line-height:7.45px;color:#3a8ee6;text-align:center;font-weight:500">张伟伟</div>
<div class="t" style="left:265.2px;top:661.0px;font-size:5.2px;color:#555;letter-spacing:.25px">员工: <span style="color:#f2595c">0/90</span></div>
<div class="t" style="left:265.2px;top:669.8px;font-size:5.2px;color:#555;letter-spacing:.25px">编制: 0/90</div>
<div class="abs" style="left:311.3px;top:583.1px;width:37.4px;height:95.2px;background:#fff;border:1px solid #fbe9cc;border-radius:2px"></div>
<div class="abs" style="left:311.3px;top:583.1px;width:14.8px;height:72.2px;background:#f8b73a;border-radius:2px 0 0 0"></div>
<svg class="abs" style="left:315.5px;top:587.8px" width="6.4" height="6" viewBox="0 0 9 8.5" fill="#fff"><rect x="3.2" y="0" width="2.6" height="2.6"/><rect x="0" y="5.8" width="2.4" height="2.6"/><rect x="3.3" y="5.8" width="2.4" height="2.6"/><rect x="6.6" y="5.8" width="2.4" height="2.6"/><path d="M4.5 2.6v3.2M1.2 5.8V4.3h6.6v1.5" stroke="#fff" stroke-width=".8" fill="none"/></svg>
<div class="abs" style="left:315.6px;top:598.8px;width:6.2px;font-size:6.1px;line-height:8.4px;color:#fdeccb;text-align:center">销售部</div>
<svg class="abs" style="left:329.5px;top:587.6px" width="15" height="15" viewBox="0 0 15 15"><circle cx="7.5" cy="7.5" r="7.5" fill="#e6edfc"/><circle cx="7.5" cy="5.7" r="1.9" fill="#c9d8f8"/><path d="M3.9 11.2c0-2 1.6-3 3.6-3s3.6 1 3.6 3z" fill="#c9d8f8"/></svg>
<div class="abs" style="left:330.2px;top:607.8px;width:5.3px;font-size:5.2px;line-height:7.45px;color:#666;text-align:center">财务主管</div>
<div class="abs" style="left:339.1px;top:607.5px;width:6px;font-size:5.8px;line-height:7.45px;color:#3a8ee6;text-align:center;font-weight:500">张伟伟</div>
<div class="t" style="left:314.1px;top:661.0px;font-size:5.2px;color:#555;letter-spacing:.25px">员工: <span style="color:#f2595c">0/90</span></div>
<div class="t" style="left:314.1px;top:669.8px;font-size:5.2px;color:#555;letter-spacing:.25px">编制: 0/90</div>
<div class="abs" style="left:360.2px;top:583.1px;width:37.4px;height:95.2px;background:#fff;border:1px solid #fbe9cc;border-radius:2px"></div>
<div class="abs" style="left:360.2px;top:583.1px;width:14.8px;height:72.2px;background:#f8b73a;border-radius:2px 0 0 0"></div>
<svg class="abs" style="left:364.4px;top:587.8px" width="6.4" height="6" viewBox="0 0 9 8.5" fill="#fff"><rect x="3.2" y="0" width="2.6" height="2.6"/><rect x="0" y="5.8" width="2.4" height="2.6"/><rect x="3.3" y="5.8" width="2.4" height="2.6"/><rect x="6.6" y="5.8" width="2.4" height="2.6"/><path d="M4.5 2.6v3.2M1.2 5.8V4.3h6.6v1.5" stroke="#fff" stroke-width=".8" fill="none"/></svg>
<div class="abs" style="left:364.6px;top:598.8px;width:6.2px;font-size:6.1px;line-height:8.4px;color:#fdeccb;text-align:center">销售部</div>
<svg class="abs" style="left:378.4px;top:587.6px" width="15" height="15" viewBox="0 0 15 15"><circle cx="7.5" cy="7.5" r="7.5" fill="#e6edfc"/><circle cx="7.5" cy="5.7" r="1.9" fill="#c9d8f8"/><path d="M3.9 11.2c0-2 1.6-3 3.6-3s3.6 1 3.6 3z" fill="#c9d8f8"/></svg>
<div class="abs" style="left:379.1px;top:607.8px;width:5.3px;font-size:5.2px;line-height:7.45px;color:#666;text-align:center">财务主管</div>
<div class="abs" style="left:388.1px;top:607.5px;width:6px;font-size:5.8px;line-height:7.45px;color:#3a8ee6;text-align:center;font-weight:500">张伟伟</div>
<div class="t" style="left:363.1px;top:661.0px;font-size:5.2px;color:#555;letter-spacing:.25px">员工: <span style="color:#f2595c">0/90</span></div>
<div class="t" style="left:363.1px;top:669.8px;font-size:5.2px;color:#555;letter-spacing:.25px">编制: 0/90</div>
<div class="abs" style="left:409.2px;top:583.1px;width:37.4px;height:95.2px;background:#fff;border:1px solid #fbe9cc;border-radius:2px"></div>
<div class="abs" style="left:409.2px;top:583.1px;width:14.8px;height:72.2px;background:#f8b73a;border-radius:2px 0 0 0"></div>
<svg class="abs" style="left:413.4px;top:587.8px" width="6.4" height="6" viewBox="0 0 9 8.5" fill="#fff"><rect x="3.2" y="0" width="2.6" height="2.6"/><rect x="0" y="5.8" width="2.4" height="2.6"/><rect x="3.3" y="5.8" width="2.4" height="2.6"/><rect x="6.6" y="5.8" width="2.4" height="2.6"/><path d="M4.5 2.6v3.2M1.2 5.8V4.3h6.6v1.5" stroke="#fff" stroke-width=".8" fill="none"/></svg>
<div class="abs" style="left:413.5px;top:598.8px;width:6.2px;font-size:6.1px;line-height:8.4px;color:#fdeccb;text-align:center">销售部</div>
<svg class="abs" style="left:427.4px;top:587.6px" width="15" height="15" viewBox="0 0 15 15"><circle cx="7.5" cy="7.5" r="7.5" fill="#e6edfc"/><circle cx="7.5" cy="5.7" r="1.9" fill="#c9d8f8"/><path d="M3.9 11.2c0-2 1.6-3 3.6-3s3.6 1 3.6 3z" fill="#c9d8f8"/></svg>
<div class="abs" style="left:428.1px;top:607.8px;width:5.3px;font-size:5.2px;line-height:7.45px;color:#666;text-align:center">财务主管</div>
<div class="abs" style="left:437.0px;top:607.5px;width:6px;font-size:5.8px;line-height:7.45px;color:#3a8ee6;text-align:center;font-weight:500">张伟伟</div>
<div class="t" style="left:412.0px;top:661.0px;font-size:5.2px;color:#555;letter-spacing:.25px">员工: <span style="color:#f2595c">0/90</span></div>
<div class="t" style="left:412.0px;top:669.8px;font-size:5.2px;color:#555;letter-spacing:.25px">编制: 0/90</div>
<svg class="abs" style="left:0;top:0" width="1125" height="698" viewBox="0 0 1125 698"><rect x="182" y="424" width="385" height="268" rx="1" fill="none" stroke="#f5b400" stroke-width="2" stroke-dasharray="6 2"/></svg>
<!-- ============ PROMOTION PANEL ============ -->
<div class="abs" style="left:576px;top:330px;width:262px;height:364px;background:#fff"></div>
<svg class="abs" style="left:585.4px;top:339.8px" width="10.4" height="10.8" viewBox="0 0 10.4 10.8" fill="none" stroke="#45a0f8" stroke-width=".95" stroke-linejoin="round" stroke-linecap="round"><path d="M.8 4.2l2.2 1.3 2.2-3.3 2.2 3.3 2.2-1.3-.7 4.4a1.4 1.4 0 0 1-1.4 1.2H2.9a1.4 1.4 0 0 1-1.4-1.2z"/><path d="M4.1 6.6l1.1 1.1 1.1-1.1"/><circle cx="5.2" cy="1.1" r=".75" fill="#2e8cf0" stroke="none"/></svg>
<div class="t" style="left:603px;top:341.9px;font-size:9.7px;color:#333">晋升通道</div>
<svg class="abs" style="left:820.6px;top:343.2px" width="8.6" height="5" viewBox="0 0 8.6 5"><path d="M.4 4.6L4.3.6l3.9 4" stroke="#a3a3a3" stroke-width=".95" fill="none"/></svg>
<div class="abs" style="left:578px;top:360px;width:258px;height:1px;background:#efefef"></div>
<div class="abs" style="left:587.3px;top:370.3px;width:73.2px;height:315.3px;background:#eef3fa"></div>
<div class="abs" style="left:587.3px;top:370.3px;width:240.2px;height:316.3px;border:1px solid #e3e6eb"></div>
<div class="abs" style="left:660.5px;top:370.3px;width:1px;height:315.3px;background:#e3e6eb"></div>
<div class="abs" style="left:623.3px;top:370.3px;width:1px;height:109.5px;background:#e3e6eb"></div>
<div class="abs" style="left:623.3px;top:597.4px;width:1px;height:88.2px;background:#e3e6eb"></div>
<div class="abs" style="left:623.3px;top:450.2px;width:204.2px;height:1px;background:#e3e6eb"></div>
<div class="abs" style="left:587.3px;top:479.8px;width:240.2px;height:1px;background:#e3e6eb"></div>
<div class="abs" style="left:587.3px;top:509.2px;width:240.2px;height:1px;background:#e3e6eb"></div>
<div class="abs" style="left:587.3px;top:538.6px;width:240.2px;height:1px;background:#e3e6eb"></div>
<div class="abs" style="left:587.3px;top:568px;width:240.2px;height:1px;background:#e3e6eb"></div>
<div class="abs" style="left:587.3px;top:597.4px;width:240.2px;height:1px;background:#e3e6eb"></div>
<div class="abs" style="left:623.3px;top:626.8px;width:204.2px;height:1px;background:#e3e6eb"></div>
<div class="abs" style="left:623.3px;top:656.2px;width:204.2px;height:1px;background:#e3e6eb"></div>
<div class="t" style="left:565.3px;width:80px;text-align:center;top:439.9px;font-size:9.2px;color:#333;font-weight:400">P7</div>
<div class="t" style="left:601.9px;width:80px;text-align:center;top:407.5px;font-size:9.2px;color:#333;font-weight:400">P7–2</div>
<div class="t" style="left:602.3px;width:80px;text-align:center;top:461.7px;font-size:9.2px;color:#333;font-weight:400">P7–1</div>
<div class="t" style="left:584.2px;width:80px;text-align:center;top:491.0px;font-size:9.2px;color:#333;font-weight:400">P6</div>
<div class="t" style="left:584.2px;width:80px;text-align:center;top:520.4px;font-size:9.2px;color:#333;font-weight:400">P5</div>
<div class="t" style="left:584.2px;width:80px;text-align:center;top:549.2px;font-size:9.2px;color:#2e8cf0;font-weight:400">P4</div>
<div class="t" style="left:584.2px;width:80px;text-align:center;top:579.1px;font-size:9.2px;color:#333;font-weight:400">P3</div>
<div class="t" style="left:601.2px;width:80px;text-align:center;top:608.8px;font-size:9.2px;color:#333;font-weight:400">P2–3</div>
<div class="t" style="left:601.2px;width:80px;text-align:center;top:638.0px;font-size:9.2px;color:#333;font-weight:400">P2–2</div>
<div class="t" style="left:601.2px;width:80px;text-align:center;top:667.5px;font-size:9.2px;color:#333;font-weight:400">P2–1</div>
<div class="t" style="left:566.9px;width:80px;text-align:center;top:646.6px;font-size:9.2px;color:#333;font-weight:400">P2</div>
<svg class="abs" style="left:602.4px;top:548.2px" width="9" height="8.4" viewBox="0 0 9 8.4"><path d="M.3 3l2.2 1.3L4.5.6l2 3.7L8.7 3l-.9 4.9H1.2z" fill="#f5a623"/><circle cx="4.5" cy="5.3" r="1" fill="#fbd38a"/></svg>
<div class="t" style="left:700.7px;top:401.1px;font-size:8.4px;color:#555">首席财务</div>
<div class="t" style="left:700.7px;top:462.2px;font-size:8.4px;color:#555">会计总监</div>
<div class="t" style="left:700.7px;top:491.3px;font-size:8.4px;color:#555">正高级会计</div>
<div class="t" style="left:700.7px;top:520.7px;font-size:8.4px;color:#555">副高级会计</div>
<div class="t" style="left:700.7px;top:549.5px;font-size:8.4px;color:#2e8cf0">中级会计</div>
<div class="t" style="left:700.7px;top:579.4px;font-size:8.4px;color:#555">初级会计</div>
<div class="t" style="left:700.7px;top:609.1px;font-size:8.4px;color:#555">优秀员工</div>
<div class="t" style="left:700.7px;top:638.3px;font-size:8.4px;color:#555">正式员工</div>
<div class="t" style="left:700.7px;top:667.8px;font-size:8.4px;color:#555">实习员工</div>
<svg class="abs" style="left:0;top:0" width="1125" height="698" viewBox="0 0 1125 698"><rect x="577" y="331" width="260" height="362" rx="1" fill="none" stroke="#f5b400" stroke-width="2" stroke-dasharray="6 2"/></svg>
<!-- ============ COMPETENCY PANEL ============ -->
<div id="comp" class="abs" style="left:844px;top:257.5px;width:266px;height:436.5px;background:#fff;overflow:hidden">
<div class="t" style="left:11.5px;top:25.6px;font-size:13.9px;color:#333">张慧慧</div>
<div class="abs" style="left:58.9px;top:24.8px;width:17px;height:12.4px;border-radius:6.2px;background:#2e86e6"><svg class="abs" style="left:4.5px;top:2.6px" width="8" height="7.4" viewBox="0 0 8 7.4" fill="none" stroke="#fff" stroke-width=".85"><circle cx="3" cy="4.4" r="2.4"/><path d="M4.8 2.6L7.2.4M5.2.4h2v2"/></svg></div>
<div class="abs" style="left:78.8px;top:24.8px;width:25.5px;height:12.4px;border-radius:6.2px;background:#3bb273;color:#fff;font-size:8.3px;line-height:13.4px;text-align:center">正式</div>
<div class="abs" style="left:212.7px;top:11px;width:39.2px;height:39.2px;border-radius:20px;background:#2c92fa;color:#fff;font-size:13.5px;line-height:42px;text-align:center">慧慧</div>
<div class="t" style="left:11.6px;top:66.4px;font-size:9.6px;color:#666">部门未填写</div>
<div class="t" style="left:11.6px;top:84px;font-size:9.6px;color:#666">岗位未填写 <span style="color:#2e8cf0;font-size:9.5px">岗位职责</span></div>
<div class="abs" style="left:0;top:108.5px;width:266px;height:1px;background:#f3f3f3"></div>
<div class="t" style="left:16.3px;top:121.3px;font-size:9.7px;color:#aaa">员工信息</div>
<div class="t" style="left:76.8px;top:121.3px;font-size:9.7px;color:#333">雷达图</div>
<div class="t" style="left:129.2px;top:121.3px;font-size:9.7px;color:#aaa">合同管理</div>
<div class="t" style="left:188.2px;top:121.3px;font-size:9.7px;color:#aaa">公司兼任</div>
<div class="t" style="left:248.8px;top:121.3px;font-size:9.7px;color:#aaa">绩效</div>
<div class="abs" style="left:83.8px;top:137.6px;width:15.6px;height:2.3px;background:#333;border-radius:1px"></div>
<div class="abs" style="left:0;top:140.1px;width:266px;height:6.4px;background:#f0f0f0"></div>
<svg class="abs" style="left:241.7px;top:157.4px" width="8" height="8" viewBox="0 0 8 8" fill="none" stroke="#b5b5b5" stroke-width=".7"><path d="M.4 2.4V.4h2M5.6.4h2v2M7.6 5.6v2h-2M2.4 7.6h-2v-2M.6.6l2 2M7.4.6l-2 2M7.4 7.4l-2-2M.6 7.4l2-2"/></svg>
<svg class="abs" style="left:0;top:0" width="266" height="436.5" viewBox="0 0 266 436.5">
<g fill="none" stroke="#e4e6ea" stroke-width=".7">
<circle cx="144.5" cy="288.4" r="22.6"/>
<circle cx="144.5" cy="288.4" r="45.3"/>
<circle cx="144.5" cy="288.4" r="67.9"/>
<circle cx="144.5" cy="288.4" r="90.6"/>
<path d="M144.5 288.4L144.5 197.8"/>
<path d="M144.5 288.4L179.2 204.7"/>
<path d="M144.5 288.4L208.6 224.3"/>
<path d="M144.5 288.4L228.2 253.7"/>
<path d="M144.5 288.4L235.1 288.4"/>
<path d="M144.5 288.4L228.2 323.1"/>
<path d="M144.5 288.4L208.6 352.5"/>
<path d="M144.5 288.4L179.2 372.1"/>
<path d="M144.5 288.4L144.5 379.0"/>
<path d="M144.5 288.4L109.8 372.1"/>
<path d="M144.5 288.4L80.4 352.5"/>
<path d="M144.5 288.4L60.8 323.1"/>
<path d="M144.5 288.4L53.9 288.4"/>
<path d="M144.5 288.4L60.8 253.7"/>
<path d="M144.5 288.4L80.4 224.3"/>
<path d="M144.5 288.4L109.8 204.7"/>
</g>
<path d="M144.5 288.4V197.8" stroke="#b9bdc4" stroke-width=".8"/>
<path d="M142.1 288.4h2.4" stroke="#b9bdc4" stroke-width=".7"/>
<path d="M142.1 265.8h2.4" stroke="#b9bdc4" stroke-width=".7"/>
<path d="M142.1 243.1h2.4" stroke="#b9bdc4" stroke-width=".7"/>
<path d="M142.1 220.4h2.4" stroke="#b9bdc4" stroke-width=".7"/>
<path d="M142.1 197.8h2.4" stroke="#b9bdc4" stroke-width=".7"/>
<path d="M144.5 227.7C155.2 232.8 151.1 245.2 161.8 246.5C178.1 248.5 183.0 231.1 198.6 234.3C211.0 236.8 216.7 245.1 217.8 258.0C219.1 272.2 206.9 272.5 203.4 288.4C200.8 300.4 205.7 301.0 205.6 313.7C205.5 330.3 209.6 332.8 203.0 346.9C196.2 361.4 187.8 377.6 178.7 370.8C158.5 356.0 162.1 311.3 144.5 303.8C133.1 299.0 125.4 345.5 120.6 346.2C116.6 346.7 136.2 313.1 126.8 306.1C115.7 297.7 95.6 320.9 79.6 315.3C70.7 312.1 72.7 299.8 77.0 288.4C81.5 276.5 94.2 280.8 97.2 268.8C101.0 253.9 84.8 246.2 90.7 234.6C95.6 224.9 104.4 228.0 118.7 226.2C131.3 224.6 133.7 222.6 144.5 227.7Z" fill="rgba(96,140,245,.17)" stroke="#5aadf6" stroke-width="1.1"/>
</svg>
<div class="t rl" style="left:121.0px;top:184.7px">学习/提炼能力</div>
<div class="t rl" style="left:168.4px;top:189.4px">沟通、谈判能力</div>
<div class="t rl" style="left:208.0px;top:202.2px">承压能力</div>
<div class="t rl" style="left:232.8px;top:240.2px">执行力</div>
<div class="t rl" style="left:241.7px;top:282.4px">专业知识</div>
<div class="t rl" style="left:234.9px;top:326.0px">关联知识</div>
<div class="t rl" style="left:211.4px;top:363.5px">技术能力</div>
<div class="t rl" style="left:175.6px;top:389.5px">业务能力</div>
<div class="t rl" style="left:127.4px;top:385.3px">项目计划能力</div>
<div class="t rl" style="right:146.3px;top:380.6px">项目跟踪和控制能力</div>
<div class="t rl" style="right:185.5px;top:359.2px">风险识别与管控</div>
<div class="t rl" style="right:210.3px;top:329.8px">度量及数据分析</div>
<div class="t rl" style="right:218.8px;top:282.4px">组建项目管理能力</div>
<div class="t rl" style="right:208.1px;top:233.4px">成本分析控制能力</div>
<div class="t rl" style="right:183.8px;top:199.7px">团队影响力</div>
<div class="t rl" style="right:150.5px;top:189.0px">带人的能力</div>
<div class="t rl" style="right:128.2px;top:194.9px;color:#777">1000</div>
<div class="t rl" style="right:128.2px;top:217.6px;color:#777">750</div>
<div class="t rl" style="right:128.2px;top:240.2px;color:#777">500</div>
<div class="t rl" style="right:128.2px;top:262.8px;color:#777">250</div>
<div class="t rl" style="right:128.2px;top:285.5px;color:#777">0</div>
</div>
<svg class="abs" style="left:0;top:0" width="1125" height="698" viewBox="0 0 1125 698"><rect x="845" y="258" width="264" height="435" rx="1" fill="none" stroke="#f5b400" stroke-width="2" stroke-dasharray="6 2"/></svg>
<!-- ============ ANNOTATIONS ============ -->
<div class="t big" style="left:644.6px;top:350.2px">员工晋升</div>
<div class="t big" style="left:644.6px;top:394.2px">通道</div>
<div class="t big" style="left:954px;top:334.2px">胜任力</div>
<div class="t big" style="left:954px;top:378px">模型</div>

</div>
</body>
</html>
